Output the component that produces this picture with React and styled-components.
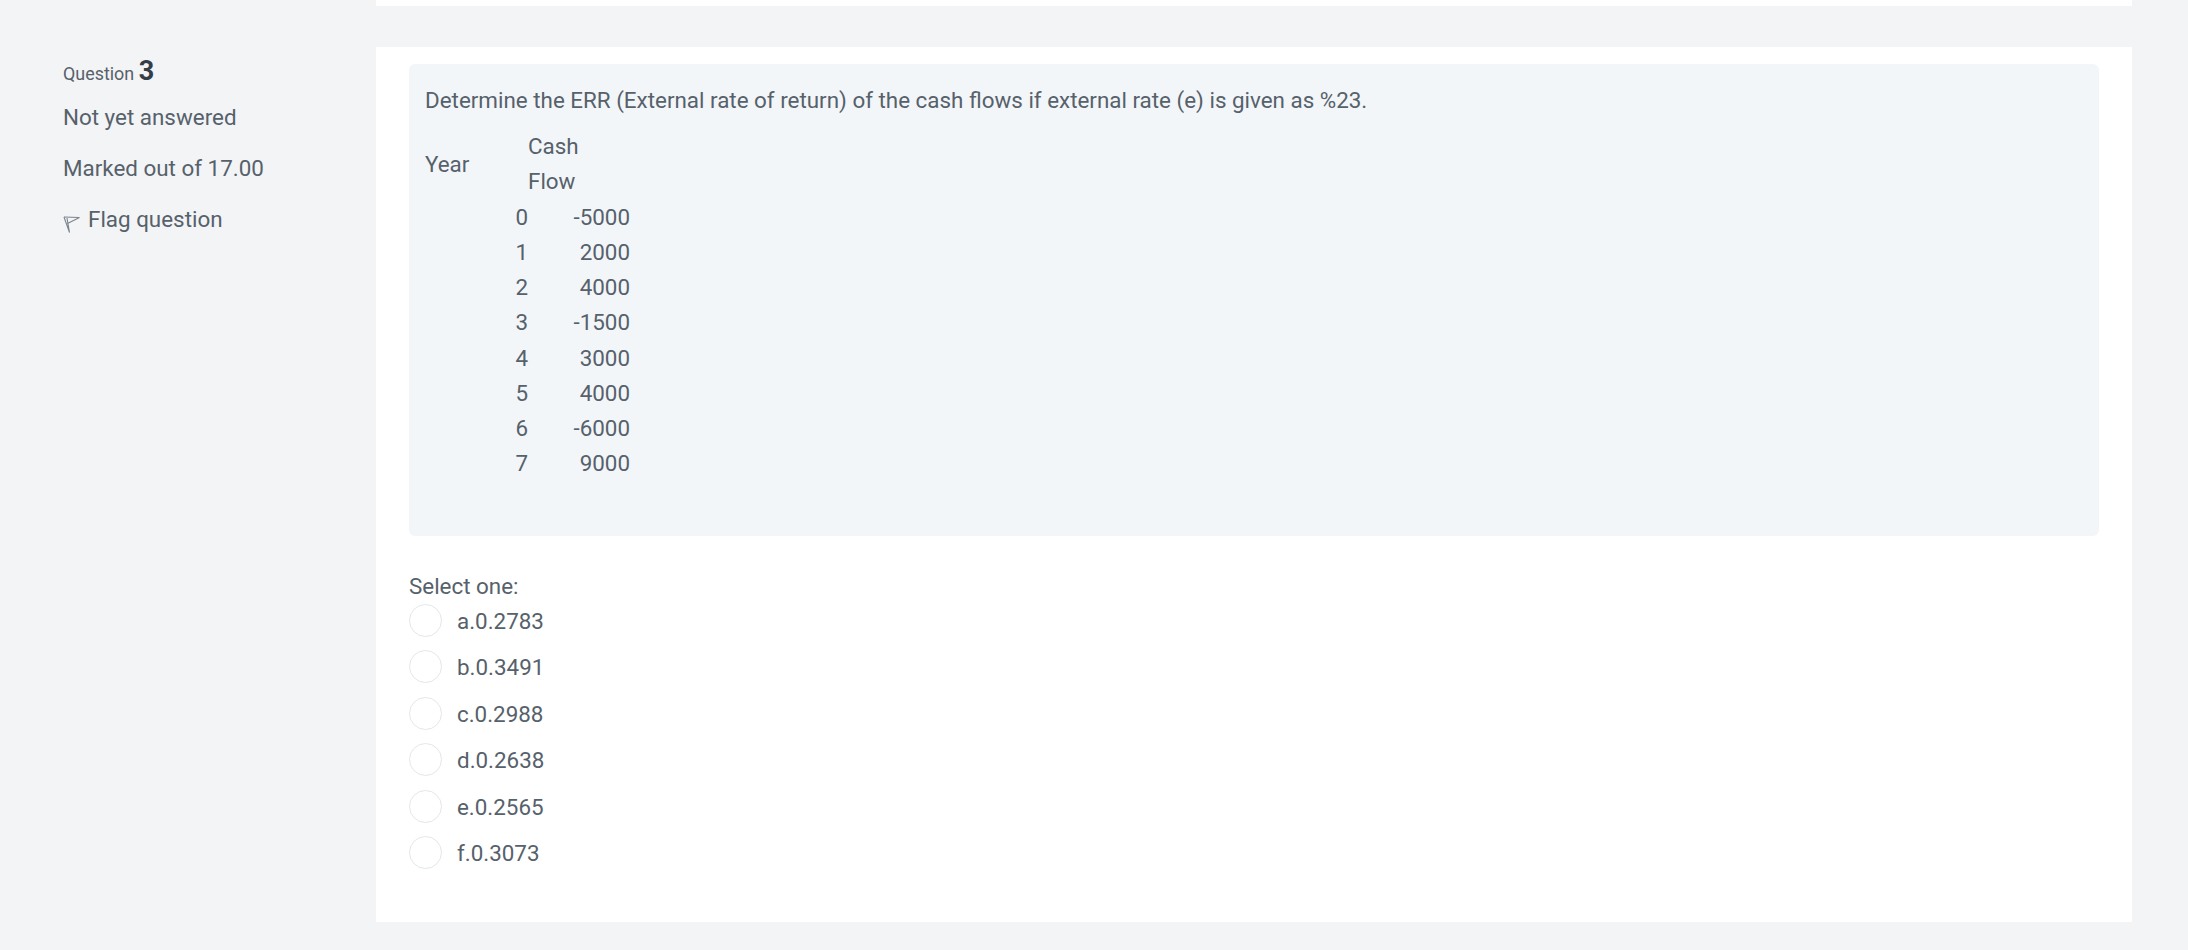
import React from 'react';
import styled, { createGlobalStyle } from 'styled-components';

const GlobalStyle = createGlobalStyle`
  html, body {
    margin: 0;
    padding: 0;
    background: #f3f4f6;
  }
  body {
    font-family: Roboto, "Liberation Sans", sans-serif;
    font-size: 22.4px;
    line-height: 35px;
    color: #56616b;
  }
`;

const Page = styled.div`
  width: 2188px;
  height: 950px;
  overflow: hidden;
`;

const PreviousCard = styled.div`
  margin-left: 376px;
  width: 1756px;
  height: 6px;
  background: #fff;
`;

const QuestionRow = styled.div`
  display: grid;
  grid-template-columns: 376px 1756px;
  margin-top: 41px;
`;

const Sidebar = styled.aside`
  padding: 6px 0 0 63px;
`;

const QuestionNo = styled.h3`
  margin: 0 0 7.5px;
  font-size: 17.9px;
  font-weight: 400;
  line-height: 36px;
`;

const Number = styled.span`
  font-size: 27px;
  font-weight: 700;
  color: #343e48;
`;

const Meta = styled.div`
  margin-bottom: 16px;
`;

const FlagLink = styled.div`
  display: flex;
  align-items: center;
  gap: 8px;
`;

const FlagIcon = styled.svg`
  width: 17px;
  height: 18px;
  margin-top: 9px;
  flex: none;
`;

const Card = styled.main`
  background: #fff;
  height: 875px;
  padding: 17px 33px 0;
  box-sizing: border-box;
`;

const QuestionBox = styled.div`
  height: 472px;
  background: #f3f6f9;
  border-radius: 6px;
  padding: 19px 16px 0;
  box-sizing: border-box;
`;

const Prompt = styled.p`
  margin: 0 0 11px;
`;

const FlowTable = styled.table`
  border-collapse: collapse;
  border-spacing: 0;
`;

const Cell = styled.td`
  padding: 0;
  width: ${(p) => p.$width}px;
  text-align: ${(p) => p.$align || 'right'};
  line-height: 35.1px;
`;

const HeadCell = styled(Cell)`
  padding-bottom: 1px;
`;

const SelectOne = styled.div`
  margin-top: 33px;
  line-height: 35px;
`;

const Options = styled.div`
  display: flex;
  flex-direction: column;
  gap: 13.4px;
`;

const Option = styled.label`
  display: flex;
  align-items: center;
  gap: 15px;
  height: 33px;
`;

const OptionText = styled.span`
  padding-top: 2px;
`;

const Radio = styled.span`
  width: 33px;
  height: 33px;
  flex: none;
  box-sizing: border-box;
  border: 1px solid #e3e7ea;
  border-radius: 50%;
  background: #fff;
`;

const flows = [
  [0, -5000],
  [1, 2000],
  [2, 4000],
  [3, -1500],
  [4, 3000],
  [5, 4000],
  [6, -6000],
  [7, 9000],
];

const answers = ['a.0.2783', 'b.0.3491', 'c.0.2988', 'd.0.2638', 'e.0.2565', 'f.0.3073'];

export default function App() {
  return (
    <Page>
      <GlobalStyle />
      <PreviousCard />
      <QuestionRow>
        <Sidebar>
          <QuestionNo>
            Question <Number>3</Number>
          </QuestionNo>
          <Meta>Not yet answered</Meta>
          <Meta>Marked out of 17.00</Meta>
          <FlagLink>
            <FlagIcon viewBox="0 0 17 18" fill="none" stroke="#7b848c" strokeWidth="1.1">
              <path d="M1 2 L6.5 17.5 L4 3" />
              <path d="M1 2 L16.5 2.5 L4.5 8.5" />
            </FlagIcon>
            Flag question
          </FlagLink>
        </Sidebar>
        <Card>
          <QuestionBox>
            <Prompt>
              Determine the ERR (External rate of return) of the cash flows if external rate (e) is given as %23.
            </Prompt>
            <FlowTable>
              <tbody>
                <tr>
                  <HeadCell $width={103} $align="left">Year</HeadCell>
                  <HeadCell $width={102} $align="left">Cash<br />Flow</HeadCell>
                </tr>
                {flows.map(([year, amount]) => (
                  <tr key={year}>
                    <Cell $width={103}>{year}</Cell>
                    <Cell $width={102}>{amount}</Cell>
                  </tr>
                ))}
              </tbody>
            </FlowTable>
          </QuestionBox>
          <SelectOne>Select one:</SelectOne>
          <Options>
            {answers.map((answer) => (
              <Option key={answer}>
                <Radio />
                <OptionText>{answer}</OptionText>
              </Option>
            ))}
          </Options>
        </Card>
      </QuestionRow>
    </Page>
  );
}
